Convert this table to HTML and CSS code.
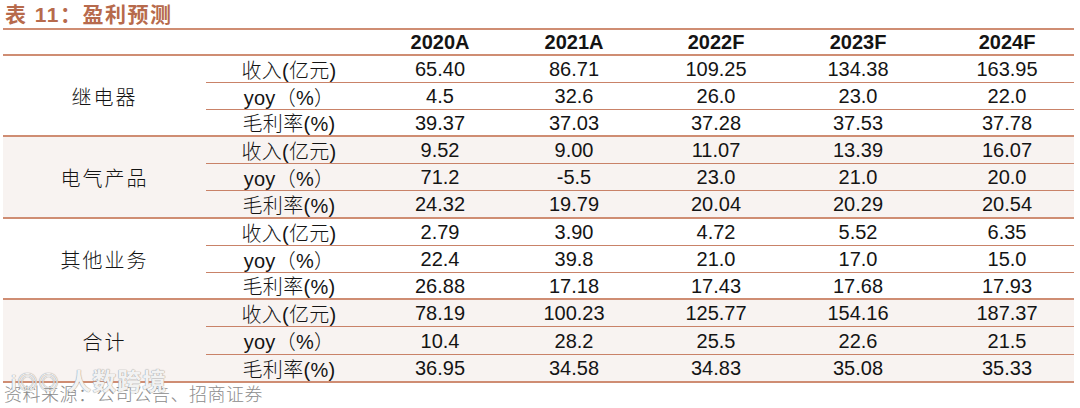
FILE: index.html
```html
<!DOCTYPE html>
<html lang="zh-CN">
<head>
<meta charset="utf-8">
<title>盈利预测</title>
<link rel="stylesheet" href="styles.css">
</head>
<body>
<div class="report">
  <div class="title">表 11：盈利预测</div>
  <div class="grid">
    <div class="hd blank"></div>
    <div class="hd">2020A</div>
    <div class="hd">2021A</div>
    <div class="hd">2022F</div>
    <div class="hd">2023F</div>
    <div class="hd last">2024F</div>

    <div class="grp">继电器</div>
    <div class="sub mi">收入(亿元)</div><div class="v mi">65.40</div><div class="v mi">86.71</div><div class="v mi">109.25</div><div class="v mi">134.38</div><div class="v mi last">163.95</div>
    <div class="sub mi">yoy（%）</div><div class="v mi">4.5</div><div class="v mi">32.6</div><div class="v mi">26.0</div><div class="v mi">23.0</div><div class="v mi last">22.0</div>
    <div class="sub ma">毛利率(%)</div><div class="v ma">39.37</div><div class="v ma">37.03</div><div class="v ma">37.28</div><div class="v ma">37.53</div><div class="v ma last">37.78</div>

    <div class="grp shade">电气产品</div>
    <div class="sub mi shade">收入(亿元)</div><div class="v mi shade">9.52</div><div class="v mi shade">9.00</div><div class="v mi shade">11.07</div><div class="v mi shade">13.39</div><div class="v mi shade last">16.07</div>
    <div class="sub mi shade">yoy（%）</div><div class="v mi shade">71.2</div><div class="v mi shade">-5.5</div><div class="v mi shade">23.0</div><div class="v mi shade">21.0</div><div class="v mi shade last">20.0</div>
    <div class="sub ma shade">毛利率(%)</div><div class="v ma shade">24.32</div><div class="v ma shade">19.79</div><div class="v ma shade">20.04</div><div class="v ma shade">20.29</div><div class="v ma shade last">20.54</div>

    <div class="grp">其他业务</div>
    <div class="sub mi">收入(亿元)</div><div class="v mi">2.79</div><div class="v mi">3.90</div><div class="v mi">4.72</div><div class="v mi">5.52</div><div class="v mi last">6.35</div>
    <div class="sub mi">yoy（%）</div><div class="v mi">22.4</div><div class="v mi">39.8</div><div class="v mi">21.0</div><div class="v mi">17.0</div><div class="v mi last">15.0</div>
    <div class="sub ma">毛利率(%)</div><div class="v ma">26.88</div><div class="v ma">17.18</div><div class="v ma">17.43</div><div class="v ma">17.68</div><div class="v ma last">17.93</div>

    <div class="grp shade">合计</div>
    <div class="sub mi shade">收入(亿元)</div><div class="v mi shade">78.19</div><div class="v mi shade">100.23</div><div class="v mi shade">125.77</div><div class="v mi shade">154.16</div><div class="v mi shade last">187.37</div>
    <div class="sub mi shade">yoy（%）</div><div class="v mi shade">10.4</div><div class="v mi shade">28.2</div><div class="v mi shade">25.5</div><div class="v mi shade">22.6</div><div class="v mi shade last">21.5</div>
    <div class="sub ma shade">毛利率(%)</div><div class="v ma shade">36.95</div><div class="v ma shade">34.58</div><div class="v ma shade">34.83</div><div class="v ma shade">35.08</div><div class="v ma shade last">35.33</div>
  </div>
  <div class="source">资料来源：公司公告、招商证券</div>
  <div class="watermark"><span class="wm-logo">i◎◎</span> 人数跨境</div>
</div>
</body>
</html>
```
FILE: styles.css
```css
html, body {
  margin: 0;
  padding: 0;
  background: #ffffff;
}
body {
  font-family: "Liberation Sans", "Noto Sans CJK SC", sans-serif;
  color: #141414;
}
.report {
  position: relative;
  width: 1071px;
  margin-left: 3px;
}
.title {
  height: 28px;
  line-height: 30px;
  padding-left: 2px;
  font-size: 21px;
  font-weight: bold;
  color: #b76a4c;
  border-bottom: 2px solid #cf8d73;
  letter-spacing: 1.5px;
}
.grid {
  display: grid;
  grid-template-columns: 203px 166px 136px 132px 152px 132px 150px;
  grid-template-rows: 26px 27px 27px 27px 27px 27px 28px 27px 27px 27px 27px 28px 28px;
  font-size: 20px;
}
.grid > div {
  box-sizing: border-box;
  display: flex;
  align-items: center;
  justify-content: center;
  white-space: nowrap;
}
.hd {
  font-weight: bold;
  border-bottom: 2px solid #cf8d73;
}
.hd.blank {
  grid-column: span 2;
}
.last {
  padding-left: 16px;
}
.grp {
  grid-row: span 3;
  border-bottom: 2px solid #cf8d73;
  letter-spacing: 2px;
  padding-top: 1px;
  font-weight: 300;
}
.sub {
  font-weight: 300;
  letter-spacing: 0.3px;
}
.mi {
  border-bottom: 1px solid #c98268;
}
.ma {
  border-bottom: 2px solid #cf8d73;
}
.shade {
  background: #f8f3f1;
}
.v {
  padding-top: 1px;
}
.source {
  height: 24px;
  line-height: 24px;
  padding-left: 1px;
  font-size: 18px;
  font-weight: 300;
  color: #8c8c8c;
  letter-spacing: 0.5px;
}
.watermark {
  position: absolute;
  left: 8px;
  top: 362px;
  font-size: 24px;
  font-weight: bold;
  color: rgba(255, 255, 255, 0.9);
  text-shadow: 0 0 1px #9a9a9a, 0 0 1px #9a9a9a;
  letter-spacing: 1px;
}
.wm-logo {
  font-size: 20px;
}
```
